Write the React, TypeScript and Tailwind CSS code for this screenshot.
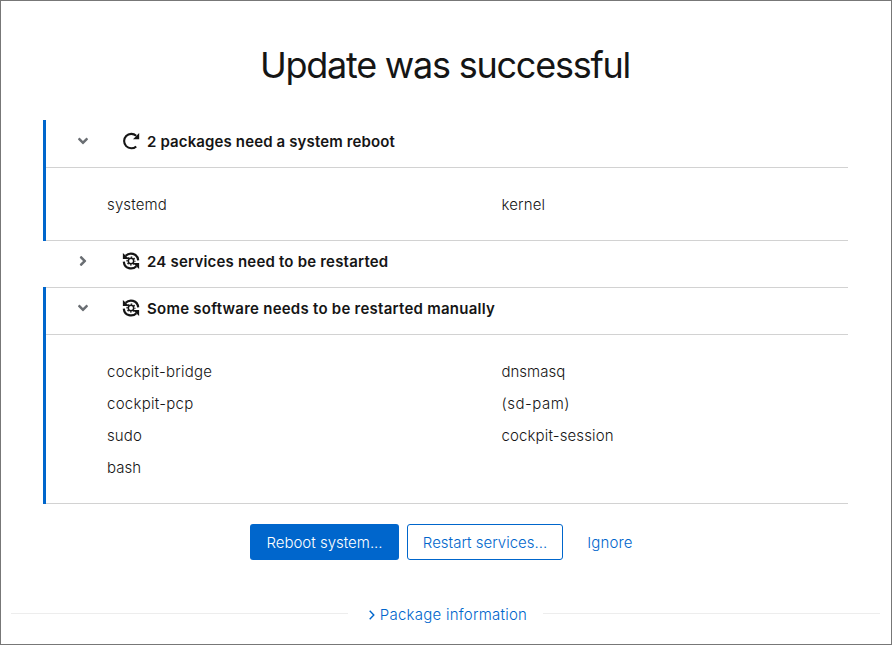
import type { ReactNode } from "react";
import { FaAngleDown, FaAngleRight } from "react-icons/fa";

function RebootIcon() {
  return (
    <svg className="mb-0.5 block h-[18px] w-[18px]" viewBox="0 0 18 18" fill="none">
      <path d="M14.2 3.8A7.2 7.2 0 1 0 14.2 14.4" stroke="#151515" strokeWidth="2.1" />
      <path d="M17.2 1V7.2H11Z" fill="#151515" />
    </svg>
  );
}

function ServiceIcon() {
  return (
    <svg className="mb-0.5 block h-[18px] w-[18px]" viewBox="0 0 18 18" fill="none" stroke="#151515">
      <path d="M3.6 3.8C7.4 0 15.5 .8 16.2 8.4" strokeWidth="2.2" />
      <path d="M14.4 14.2C10.6 18 2.5 17.2 1.8 9.6" strokeWidth="2.2" />
      <path d="M.9 1V6.9H7.2Z" fill="#151515" stroke="none" />
      <path d="M17.1 17V11.1H10.8Z" fill="#151515" stroke="none" />
      <circle cx="9" cy="9" r="2.7" strokeWidth="1.5" />
      <circle cx="9" cy="9" r="3.9" strokeWidth="1.4" strokeDasharray="1.5 1.563" strokeDashoffset=".75" />
    </svg>
  );
}

function Header({ open, icon, children }: { open?: boolean; icon: ReactNode; children: ReactNode }) {
  return (
    <div className="flex h-[47px] items-center border-b border-[#d2d2d2] pb-1">
      <span className="mb-0.5 flex w-[74px] justify-center text-[16px] text-[#6a6e73]">
        {open ? <FaAngleDown /> : <FaAngleRight />}
      </span>
      <span className="ml-0.5">{icon}</span>
      <span className="ml-[7px] text-[15px] leading-6 font-semibold whitespace-nowrap">{children}</span>
    </div>
  );
}

export default function App() {
  return (
    <main className="flex h-[645px] w-[892px] flex-col border border-[#777] bg-white font-['Inter','Liberation_Sans',sans-serif] text-[15px] text-[#151515]">
      <h1 className="mt-[40px] h-[79px] pr-0.5 text-center text-[36px] leading-[48px] font-normal tracking-[-1.24px]">Update was successful</h1>
      <div className="mx-[42px] flex w-[805px] flex-col">
        <section className="border-l-[3px] border-[#06c]">
          <div className="pt-px">
            <Header open icon={<RebootIcon />}><span className="tracking-[0.13px]">2 packages need a system reboot</span></Header>
          </div>
          <div className="grid h-[73px] grid-cols-2 border-b border-[#d2d2d2] pt-[25px] pl-[61px] leading-6 font-light tracking-[0.14px]">
            <span>systemd</span>
            <span className="ml-6">kernel</span>
          </div>
        </section>
        <section className="-mb-px border-l-[3px] border-transparent">
          <Header icon={<ServiceIcon />}><span className="tracking-[0.2px]">24 services need to be restarted</span></Header>
        </section>
        <section className="border-l-[3px] border-[#06c]">
          <div className="border-t border-[#d2d2d2]">
            <Header open icon={<ServiceIcon />}><span className="tracking-[0.25px]">Some software needs to be restarted manually</span></Header>
          </div>
          <div className="grid h-[169px] grid-cols-2 content-start gap-y-2 border-b border-[#d2d2d2] pt-[25px] pl-[61px] leading-6 font-light">
            <span className="tracking-[0.24px]">cockpit-bridge</span>
            <span className="ml-6">dnsmasq</span>
            <span className="tracking-[0.27px]">cockpit-pcp</span>
            <span className="ml-6 tracking-[0.5px]">(sd-pam)</span>
            <span className="tracking-[0.1px]">sudo</span>
            <span className="ml-6 tracking-[0.13px]">cockpit-session</span>
            <span>bash</span>
          </div>
        </section>
      </div>
      <div className="mt-5 ml-[249px] flex h-9 gap-2 font-light">
        <button className="w-[149px] rounded-[3px] bg-[#06c] pt-0.5 text-white">Reboot system...</button>
        <button className="w-[156px] rounded-[3px] border border-[#06c] pt-0.5 text-[#06c]">Restart services...</button>
        <button className="w-[78px] pt-0.5 text-[#06c] tracking-[0.15px]">Ignore</button>
      </div>
      <div className="mr-[11px] ml-2.5 mt-[42px] flex h-6 items-center">
        <span className="mb-px h-px w-[337px] bg-[#ededed]" />
        <button className="mt-0.5 flex w-[195px] items-center justify-center gap-1 pl-1 font-light text-[#06c]">
          <svg className="h-4 w-2" viewBox="0 0 8 16" fill="none" stroke="currentColor" strokeWidth="1.4">
            <path d="M1.7 3.8L5.8 8L1.7 12.2" />
          </svg>
          <span className="tracking-[0.24px]">Package information</span>
        </button>
        <span className="mb-px h-px flex-1 bg-[#ededed]" />
      </div>
    </main>
  );
}
